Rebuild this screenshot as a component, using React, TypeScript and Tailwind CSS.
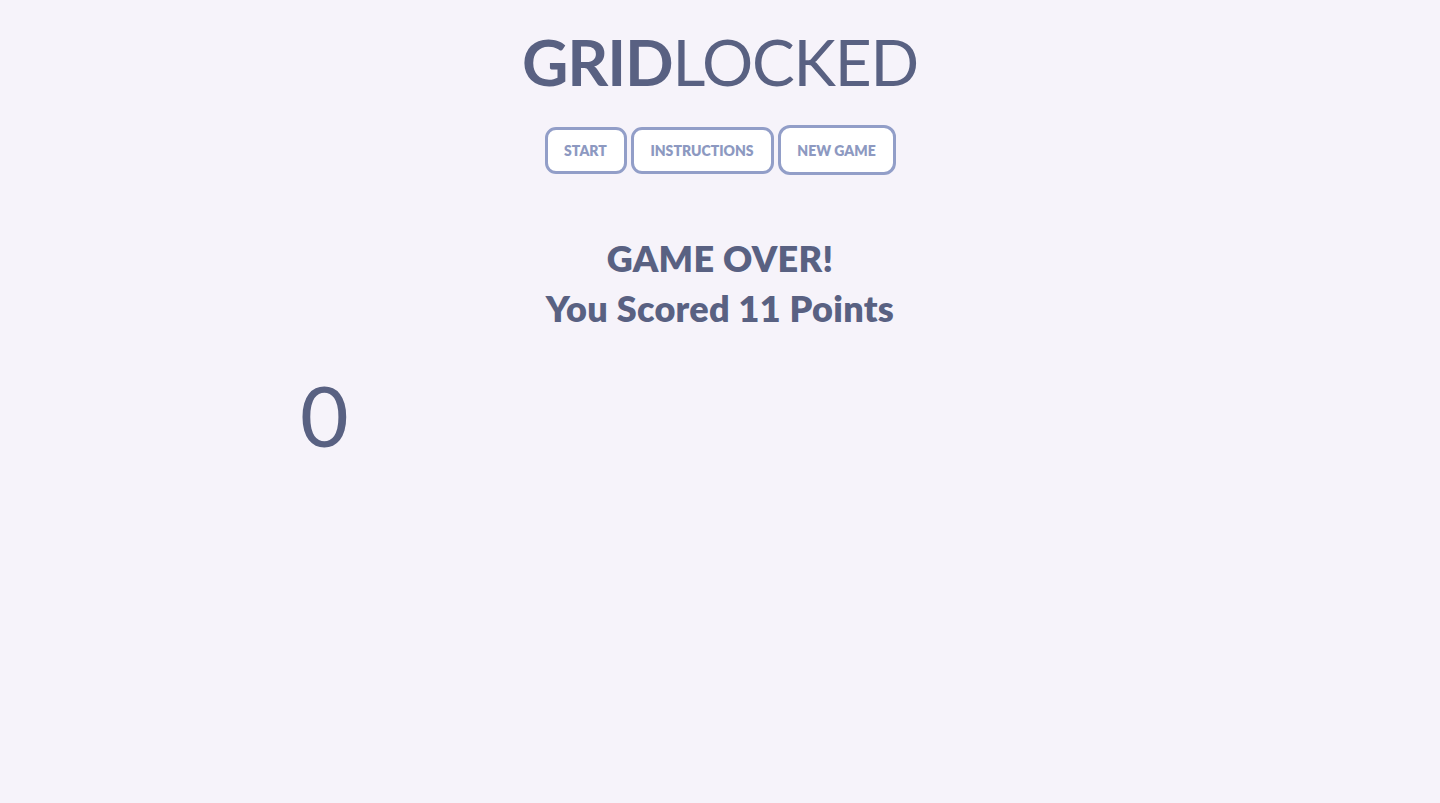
export default function App() {
    return (
        <div className="min-h-[803px] w-full bg-[#f6f3fa] text-[#596182] font-['Lato','Open_Sans',sans-serif]">
            <div className="flex flex-col items-center pt-[24px]">
                <h1 className="text-[64px] leading-[76px] tracking-[-1.2px]">
                    <span className="font-bold">GRID</span>
                    <span className="font-normal">LOCKED</span>
                </h1>
                <div className="mt-[25px] flex items-center gap-[4px]">
                    <button className="h-[47px] w-[82px] rounded-[11px] border-[3px] border-[#929ec8] bg-white text-[14px] font-extrabold text-[#8d99c1]">
                        START
                    </button>
                    <button className="h-[47px] w-[143px] rounded-[11px] border-[3px] border-[#929ec8] bg-white text-[14px] font-extrabold text-[#8d99c1]">
                        INSTRUCTIONS
                    </button>
                    <button className="h-[50px] w-[118px] rounded-[12px] border-[3px] border-[#929ec8] bg-white text-[14px] font-extrabold text-[#8d99c1]">
                        NEW GAME
                    </button>
                </div>
                <div className="mt-[58px] text-center text-[36px] font-extrabold leading-[50px] tracking-[0.3px]">
                    <div>GAME OVER!</div>
                    <div>You Scored 11 Points</div>
                </div>
                <div className="mt-[32px] w-[840px]">
                    <div className="text-[84px] leading-[100px] font-normal">0</div>
                </div>
            </div>
        </div>
    )
}
